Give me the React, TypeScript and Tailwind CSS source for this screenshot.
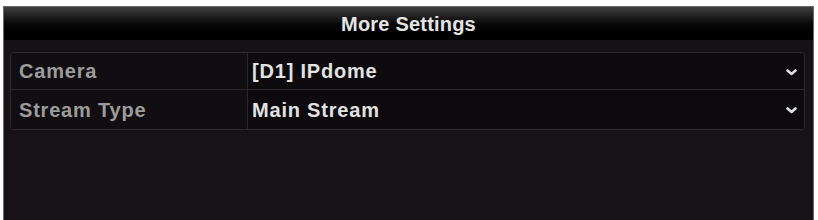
export default function App() {
  const rows = [
    { label: 'Camera', value: '[D1] IPdome' },
    { label: 'Stream Type', value: 'Main Stream' },
  ]

  return (
    <div className="w-[818px] h-[220px] bg-white pt-[6px] pl-[3px] pr-[4px] overflow-hidden font-['Liberation_Sans',Arial,sans-serif]">
      <div className="h-[214px] border border-[#6a6a6a] border-b-0 bg-[#151215] flex flex-col">
        {/* Title bar */}
        <div className="h-[33px] bg-gradient-to-b from-[#404040] via-[#060606] via-55% to-black flex items-center justify-center">
          <span className="text-[20px] font-bold text-[#e4e4e4] tracking-[0.2px]">More Settings</span>
        </div>

        {/* Settings table */}
        <div className="pt-[12px] pl-[6px] pr-[8px]">
          <div className="rounded-[4px] border border-[#2e2b2e] bg-[#0e0b0e] overflow-hidden">
            {rows.map((row, i) => (
              <div
                key={row.label}
                className={`grid grid-cols-[237px_1fr] ${i === 0 ? 'h-[37px] border-b border-[#2a272a]' : 'h-[39px]'}`}
              >
                <div className="flex items-center pl-[8px] border-r border-[#2a272a] bg-[#110e11]">
                  <span className="text-[20px] font-bold text-[#9c9c9c] tracking-[0.8px]">{row.label}</span>
                </div>
                <div className="flex items-center justify-between pl-[4px] pr-[7px] bg-[#0c0a0c]">
                  <span className="text-[20px] font-bold text-[#e2e2e2] tracking-[0.8px]">{row.value}</span>
                  <svg width="11" height="7" viewBox="0 0 11 7" className="mt-[2px]">
                    <path d="M1.5 1.5 L5.5 5 L9.5 1.5" fill="none" stroke="#dedede" strokeWidth="2.6" strokeLinecap="round" strokeLinejoin="round" />
                  </svg>
                </div>
              </div>
            ))}
          </div>
        </div>

        <div className="flex-1 bg-[#161216]" />
      </div>
    </div>
  )
}
